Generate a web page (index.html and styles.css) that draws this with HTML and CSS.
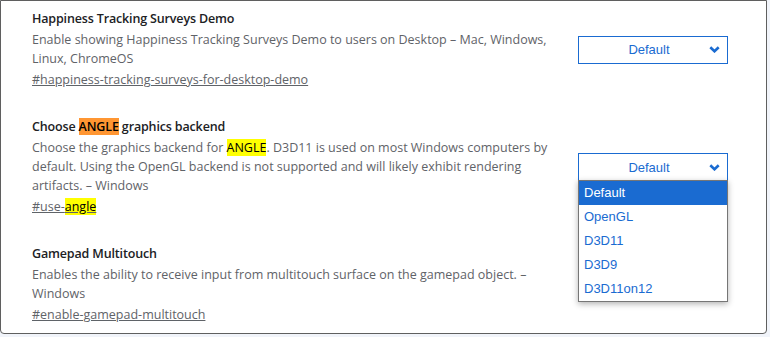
FILE: index.html
```html
<!DOCTYPE html>
<html lang="en">
<head>
    <meta charset="UTF-8">
    <meta name="viewport" content="width=device-width, initial-scale=1.0">
    <title>Experiments</title>
    <link rel="stylesheet" href="styles.css">
</head>
<body>
    <div class="experiments">
        <!-- Happiness Tracking Surveys -->
        <div class="experiment">
            <div class="experiment-text">
                <div class="experiment-name">Happiness Tracking Surveys Demo</div>
                <p class="experiment-desc">Enable showing Happiness Tracking Surveys Demo to users on Desktop – Mac, Windows, Linux, ChromeOS</p>
                <a class="permalink" href="#happiness-tracking-surveys-for-desktop-demo">#happiness-tracking-surveys-for-desktop-demo</a>
            </div>
            <div class="select">
                <span class="select-value">Default</span>
                <svg class="chevron" width="11" height="7" viewBox="0 0 11 7"><path d="M1.3 1.3 L5.5 5.3 L9.7 1.3" fill="none" stroke="#1a6bd1" stroke-width="2.6"/></svg>
            </div>
        </div>

        <!-- ANGLE backend -->
        <div class="experiment">
            <div class="experiment-text">
                <div class="experiment-name">Choose <mark class="match-active">ANGLE</mark> graphics backend</div>
                <p class="experiment-desc">Choose the graphics backend for <mark class="match">ANGLE</mark>. D3D11 is used on most Windows computers by default. Using the OpenGL backend is not supported and will likely exhibit rendering artifacts. – Windows</p>
                <a class="permalink" href="#use-angle">#use-<mark class="match">angle</mark></a>
            </div>
            <div class="select open">
                <span class="select-value">Default</span>
                <svg class="chevron" width="11" height="7" viewBox="0 0 11 7"><path d="M1.3 1.3 L5.5 5.3 L9.7 1.3" fill="none" stroke="#1a6bd1" stroke-width="2.6"/></svg>
                <ul class="select-options">
                    <li class="selected">Default</li>
                    <li>OpenGL</li>
                    <li>D3D11</li>
                    <li>D3D9</li>
                    <li>D3D11on12</li>
                </ul>
            </div>
        </div>

        <!-- Gamepad -->
        <div class="experiment">
            <div class="experiment-text">
                <div class="experiment-name">Gamepad Multitouch</div>
                <p class="experiment-desc">Enables the ability to receive input from multitouch surface on the gamepad object. – Windows</p>
                <a class="permalink" href="#enable-gamepad-multitouch">#enable-gamepad-multitouch</a>
            </div>
        </div>
    </div>
</body>
</html>
```

FILE: styles.css
```css
body {
    margin: 0;
    padding: 0;
    background-color: #f1f4fa;
    font-family: "Segoe UI", "Open Sans", sans-serif;
    font-size: 12.5px;
}

.experiments {
    width: 767px;
    box-sizing: border-box;
    background: #fff;
    border: 1px solid #5f5f5f;
    border-radius: 0 0 4px 4px;
    padding: 8px 38px 8px 31px;
    display: flex;
    flex-direction: column;
    gap: 27px;
}

.experiment {
    display: flex;
    align-items: center;
    justify-content: space-between;
}

.experiment-text {
    width: 530px;
}

.experiment-name {
    color: #202124;
    font-weight: 600;
    line-height: 20px;
    letter-spacing: -0.15px;
}

.experiment-desc {
    margin: 1px 0 0;
    color: #5f6368;
    line-height: 19px;
}

.permalink {
    display: inline-block;
    margin-top: 2px;
    color: #5f6368;
    line-height: 20px;
}

mark {
    color: #000;
}

.match {
    background: #ffff00;
}

.match-active {
    background: #ff9632;
}

.select {
    position: relative;
    width: 150px;
    height: 28px;
    box-sizing: border-box;
    border: 1px solid #1a6bd1;
    display: flex;
    align-items: center;
    font-family: "Liberation Sans", Arial, sans-serif;
    font-size: 13px;
    color: #1a6bd1;
}

.select-value {
    flex: 1;
    text-align: center;
    padding-left: 14px;
}

.chevron {
    margin: 0 7px 0 4px;
}

.select-options {
    position: absolute;
    top: 26px;
    left: -1px;
    width: 150px;
    box-sizing: border-box;
    margin: 0;
    padding: 0;
    list-style: none;
    background: #fff;
    border: 1px solid #767676;
    box-shadow: 0 2px 6px rgba(0, 0, 0, 0.3);
    z-index: 10;
}

.select-options li {
    height: 24px;
    line-height: 24px;
    padding-left: 5px;
}

.select-options li.selected {
    background: #1a6bd1;
    color: #fff;
}
```
